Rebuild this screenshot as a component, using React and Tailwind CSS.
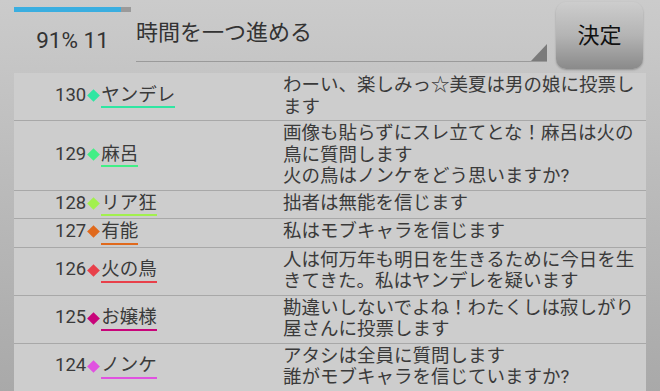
import React from "react";

const FONT = { fontFamily: "Roboto, 'Noto Sans CJK JP', 'Noto Sans', sans-serif" };

const rows = [
  { n: 130, name: "ヤンデレ", color: "#2fe6a2", msg: ["わーい、楽しみっ☆美夏は男の娘に投票し", "ます"] },
  { n: 129, name: "麻呂", color: "#42ef86", msg: ["画像も貼らずにスレ立てとな！麻呂は火の", "鳥に質問します", "火の鳥はノンケをどう思いますか?"] },
  { n: 128, name: "リア狂", color: "#a2f04e", msg: ["拙者は無能を信じます"] },
  { n: 127, name: "有能", color: "#e0691c", msg: ["私はモブキャラを信じます"] },
  { n: 126, name: "火の鳥", color: "#e8404a", msg: ["人は何万年も明日を生きるために今日を生", "きてきた。私はヤンデレを疑います"] },
  { n: 125, name: "お嬢様", color: "#c8047a", msg: ["勘違いしないでよね！わたくしは寂しがり", "屋さんに投票します"] },
  { n: 124, name: "ノンケ", color: "#e052e0", msg: ["アタシは全員に質問します", "誰がモブキャラを信じていますか?"] },
];

function Row({ r }) {
  return (
    <div className="flex border-b border-[#a8a8a8] py-[2px] text-[18.5px] leading-[21.5px] text-[#3a3a3a]">
      <div className="flex w-[269px] shrink-0 items-center pl-[41px]">
        <div className="flex items-start">
          <span className="h-[21.5px]">{r.n}</span>
          <span className="flex h-[21.5px] w-[15px] items-center justify-center">
            <span className="block h-[9px] w-[9px] rotate-45" style={{ backgroundColor: r.color }} />
          </span>
          <span className="inline-block border-b-2" style={{ borderColor: r.color }}>
            {r.name}
          </span>
        </div>
      </div>
      <div className="whitespace-nowrap">
        {r.msg.map((m, i) => (
          <div key={i}>{m}</div>
        ))}
      </div>
    </div>
  );
}

export default function App() {
  return (
    <div
      className="h-[391px] w-[660px] overflow-hidden bg-gradient-to-b from-[#cbcbcb] to-[#a9a9a9]"
      style={FONT}
    >
      <div className="flex h-[73px] pl-[14px]">
        <div className="flex w-[117px] flex-col pt-[7px]">
          <div className="flex h-[5px] w-full bg-[#9a9a9a]">
            <div className="h-full w-[107px] bg-[#3aaee0]" />
          </div>
          <div className="mt-[15px] text-center text-[22.5px] leading-[26px] text-[#333]">91% 11</div>
        </div>
        <div className="relative ml-[5px] h-[62px] w-[411px] border-b border-[#9a9a9a]">
          <div className="pt-[18px] text-[22px] leading-[30px] text-[#333]">時間を一つ進める</div>
          <svg className="absolute bottom-0 right-0" width="16" height="17" viewBox="0 0 16 17">
            <polygon points="16,0 16,17 0,17" fill="#7a7a7a" />
          </svg>
        </div>
        <div className="ml-[9px] mt-[2px] flex h-[67px] w-[87px] items-center justify-center rounded-[10px] bg-gradient-to-b from-[#cdcdcd] via-[#b4b4b4] to-[#8a8a8a] text-[22px] text-[#111] shadow-[0_1px_2px_rgba(0,0,0,0.25)]">
          決定
        </div>
      </div>
      <div className="mx-[14px] bg-[#cdcdcd]">
        {rows.map((r) => (
          <Row key={r.n} r={r} />
        ))}
        <div className="h-[20px]" />
      </div>
    </div>
  );
}
